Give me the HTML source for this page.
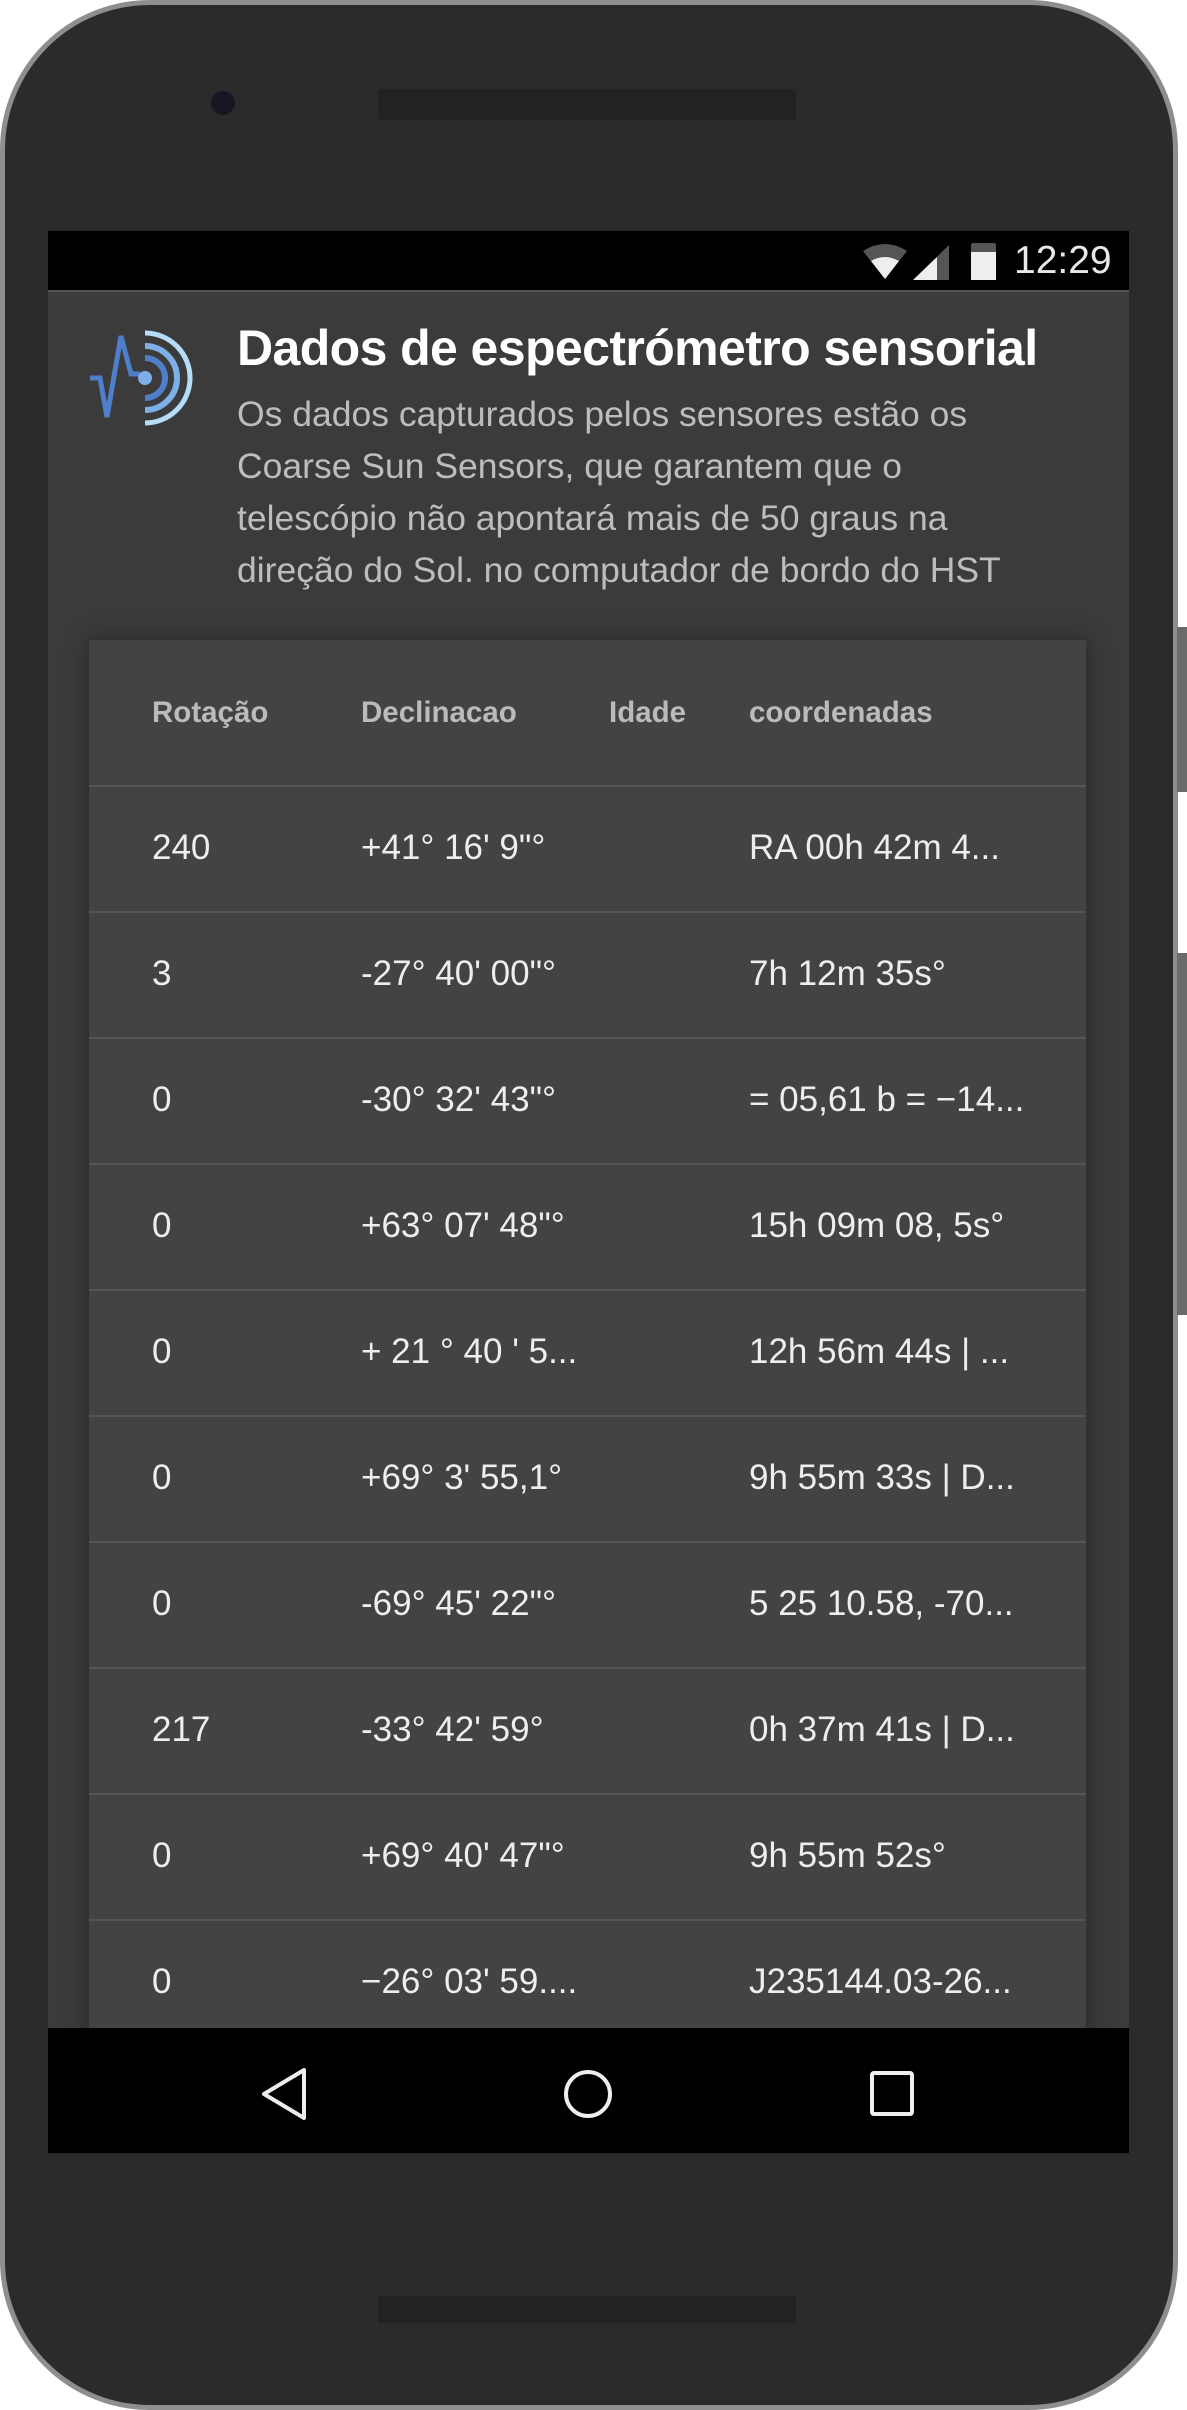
<!DOCTYPE html>
<html><head><meta charset="utf-8"><style>
*{margin:0;padding:0;box-sizing:border-box}
body{width:1187px;height:2410px;background:#fff;position:relative;overflow:hidden;font-family:"Roboto","Liberation Sans",sans-serif}
.phone{position:absolute;left:0;top:0;width:1178px;height:2410px;background:#2b2b2b;border:5px solid #8e8e8e;border-radius:150px}
.btn{position:absolute;left:1177px;width:10px;background:#6a6a6a}
.screen{position:absolute;left:48px;top:231px;width:1081px;height:1922px;background:#3b3b3b;overflow:hidden}
.status{position:absolute;left:0;top:0;width:100%;height:61px;background:#000;border-bottom:2px solid #555}
.time{position:absolute;left:966px;top:8px;color:#e8e8e8;font-size:39px;font-family:"Liberation Sans",sans-serif}
.title{position:absolute;left:189px;top:88px;color:#fff;font-size:50px;font-weight:bold;letter-spacing:-0.6px;white-space:nowrap;font-family:"Liberation Sans",sans-serif}
.desc{position:absolute;left:189px;top:157px;color:#bdbdbd;font-size:35.5px;line-height:52px;width:900px;white-space:nowrap;font-family:"Liberation Sans",sans-serif}
.card{position:absolute;left:41px;top:409px;width:997px;height:1600px;background:#434343;box-shadow:0 0 22px rgba(0,0,0,.35)}
.row{position:absolute;left:0;width:100%;height:126px;border-top:2px solid #555}
.row span{position:absolute;top:41px;color:#eee;font-size:35px;white-space:nowrap;font-family:"Liberation Sans",sans-serif}
.hdr span{position:absolute;top:56px;color:#bbb;font-size:29.5px;font-weight:bold;font-family:"Liberation Sans",sans-serif}
.c1{left:63px}.c2{left:272px}.c3{left:520px}.c4{left:660px}
.nav{position:absolute;left:0;top:1797px;width:100%;height:125px;background:#000}
</style></head><body>
<div class="phone"></div>
<div class="btn" style="top:627px;height:165px"></div>
<div class="btn" style="top:953px;height:362px"></div>
<div style="position:absolute;left:378px;top:89px;width:418px;height:31px;background:#222;border-radius:3px"></div>
<div style="position:absolute;left:211px;top:91px;width:24px;height:24px;background:#161625;border-radius:50%"></div>
<div style="position:absolute;left:378px;top:2296px;width:418px;height:27px;background:#222"></div>
<div class="screen">
 <div class="status">
  <svg style="position:absolute;left:815px;top:12px" width="140" height="40">
   <path d="M0 8 Q22 -6 44 8 L22 36 Z" fill="#555"/>
   <path d="M8 18 Q22 10 36 18 L22 36 Z" fill="#eee"/>
   <path d="M50 37 L86 2 L86 37 Z" fill="#555"/>
   <path d="M50 37 L74 14 L74 37 Z" fill="#eee"/>
   <rect x="108" y="0" width="25" height="37" rx="2" fill="#555"/>
   <rect x="108" y="9" width="25" height="28" fill="#eee"/>
  </svg>
  <div class="time">12:29</div>
 </div>
 <svg style="position:absolute;left:32px;top:79px" width="130" height="130" viewBox="0 0 130 130">
  <polyline points="10,68 20,68 27,107 41,26 51,64 60,64" fill="none" stroke="#4f7fc8" stroke-width="5" stroke-linejoin="miter"/>
  <circle cx="65" cy="68" r="7" fill="#7eb0e8"/>
  <path d="M65 48 A20 20 0 0 1 65 88" fill="none" stroke="#4f7fc8" stroke-width="6"/>
  <path d="M65 36 A32 32 0 0 1 65 100" fill="none" stroke="#7eb0e8" stroke-width="6"/>
  <path d="M65 23 A45 45 0 0 1 65 113" fill="none" stroke="#b5dcf8" stroke-width="5"/>
 </svg>
 <div class="title">Dados de espectrómetro sensorial</div>
 <div class="desc">Os dados capturados pelos sensores estão os<br>Coarse Sun Sensors, que garantem que o<br>telescópio não apontará mais de 50 graus na<br>direção do Sol. no computador de bordo do HST</div>
 <div class="card">
  <div class="hdr" style="position:absolute;left:0;top:0;width:100%;height:146px"><span class="c1">Rotação</span><span class="c2">Declinacao</span><span class="c3">Idade</span><span class="c4">coordenadas</span></div>
  <div class="row" style="top:145px"><span class="c1">240</span><span class="c2">+41° 16' 9"°</span><span class="c4">RA 00h 42m 4...</span></div>
  <div class="row" style="top:271px"><span class="c1">3</span><span class="c2">-27° 40' 00"°</span><span class="c4">7h 12m 35s°</span></div>
  <div class="row" style="top:397px"><span class="c1">0</span><span class="c2">-30° 32' 43"°</span><span class="c4">= 05,61 b = −14...</span></div>
  <div class="row" style="top:523px"><span class="c1">0</span><span class="c2">+63° 07' 48"°</span><span class="c4">15h 09m 08, 5s°</span></div>
  <div class="row" style="top:649px"><span class="c1">0</span><span class="c2">+ 21 ° 40 ' 5...</span><span class="c4">12h 56m 44s | ...</span></div>
  <div class="row" style="top:775px"><span class="c1">0</span><span class="c2">+69° 3' 55,1°</span><span class="c4">9h 55m 33s | D...</span></div>
  <div class="row" style="top:901px"><span class="c1">0</span><span class="c2">-69° 45' 22"°</span><span class="c4">5 25 10.58, -70...</span></div>
  <div class="row" style="top:1027px"><span class="c1">217</span><span class="c2">-33° 42' 59°</span><span class="c4">0h 37m 41s | D...</span></div>
  <div class="row" style="top:1153px"><span class="c1">0</span><span class="c2">+69° 40' 47"°</span><span class="c4">9h 55m 52s°</span></div>
  <div class="row" style="top:1279px"><span class="c1">0</span><span class="c2">−26° 03' 59....</span><span class="c4">J235144.03-26...</span></div>
 </div>
 <div class="nav">
  <svg width="1081" height="125">
   <path d="M256 42 L216 66 L256 90 Z" fill="none" stroke="#eee" stroke-width="4" stroke-linejoin="round"/>
   <circle cx="540" cy="66" r="22" fill="none" stroke="#eee" stroke-width="4"/>
   <rect x="824" y="45" width="40" height="41" rx="2" fill="none" stroke="#eee" stroke-width="4"/>
  </svg>
 </div>
</div>
</body></html>
